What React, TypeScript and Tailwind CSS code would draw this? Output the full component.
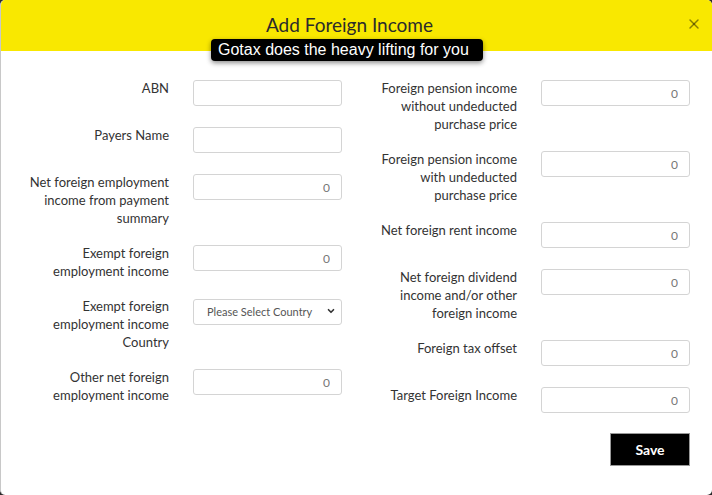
import { ChevronDown, X } from "lucide-react";

type Field = { label: string[]; kind?: "text" | "number" | "select" };

const leftFields: Field[] = [
  { label: ["ABN"], kind: "text" },
  { label: ["Payers Name"], kind: "text" },
  { label: ["Net foreign employment", "income from payment", "summary"] },
  { label: ["Exempt foreign", "employment income"] },
  { label: ["Exempt foreign", "employment income", "Country"], kind: "select" },
  { label: ["Other net foreign", "employment income"] },
];

const rightFields: Field[] = [
  { label: ["Foreign pension income", "without undeducted", "purchase price"] },
  { label: ["Foreign pension income", "with undeducted", "purchase price"] },
  { label: ["Net foreign rent income"] },
  { label: ["Net foreign dividend", "income and/or other", "foreign income"] },
  { label: ["Foreign tax offset"] },
  { label: ["Target Foreign Income"] },
];

function FieldRow({ field, inputWidth }: { field: Field; inputWidth: string }) {
  return (
    <div className="flex items-start gap-[24px] min-h-[30px] mb-[17px]">
      <label className="w-[145px] shrink-0 text-right text-[13px] leading-[18px] text-[#333]">
        {field.label.map((line, i) => (
          <span key={i} className="block whitespace-nowrap">
            {line}
          </span>
        ))}
      </label>
      {field.kind === "select" ? (
        <div className={`relative mt-px ${inputWidth}`}>
          <select className="h-[26px] w-full appearance-none rounded-[3px] border border-[#d4d4d4] bg-white pl-[13px] pr-6 text-[11px] text-[#555] outline-none">
            <option>Please Select Country</option>
          </select>
          <ChevronDown
            className="pointer-events-none absolute right-[6px] top-[8px] h-[10px] w-[10px] text-[#333]"
            strokeWidth={4}
          />
        </div>
      ) : (
        <input
          type="text"
          placeholder={field.kind === "text" ? "" : "0"}
          className={`mt-px h-[26px] ${inputWidth} rounded-[3px] border border-[#d4d4d4] bg-white px-[11px] text-right text-[12px] text-[#555] placeholder:text-[#777] outline-none`}
        />
      )}
    </div>
  );
}

export default function App() {
  return (
    <div
      className="h-[495px] w-[712px] overflow-hidden bg-[#2a2a2a]"
      style={{ fontFamily: "Lato, 'Open Sans', sans-serif" }}
    >
      <div className="relative h-full w-full overflow-hidden rounded-[5px] border-l border-[#c8c8c8] bg-white">
        {/* Header */}
        <div className="relative flex h-[51px] items-center justify-center bg-[#f9e800] pr-[14px] pb-[2px]">
          <h2 className="text-[19px] leading-none text-[#2b2b2b]">Add Foreign Income</h2>
          <button className="absolute right-[10px] top-[16px] text-black/45">
            <X className="h-[16px] w-[16px]" strokeWidth={2.2} />
          </button>
        </div>

        {/* Tooltip */}
        <div
          className="absolute left-[210px] top-[39px] z-10 flex h-[22px] w-[272px] items-center rounded-[4px] bg-black px-[7px] text-[16px] text-white shadow-[0_2px_5px_rgba(0,0,0,0.45)]"
          style={{ fontFamily: "'Liberation Sans', Arial, sans-serif" }}
        >
          Gotax does the heavy lifting for you
        </div>

        {/* Body */}
        <div className="flex pt-[28px] pl-[23px]">
          <div className="w-[348px]">
            {leftFields.map((f, i) => (
              <FieldRow key={i} field={f} inputWidth="w-[149px]" />
            ))}
          </div>
          <div className="w-[319px]">
            {rightFields.map((f, i) => (
              <FieldRow key={i} field={f} inputWidth="w-[149px]" />
            ))}
            <div className="flex justify-end pr-[1px]">
              <button className="h-[33px] w-[80px] border border-[#999] bg-black text-[14px] font-bold text-white">
                Save
              </button>
            </div>
          </div>
        </div>
      </div>
    </div>
  );
}
